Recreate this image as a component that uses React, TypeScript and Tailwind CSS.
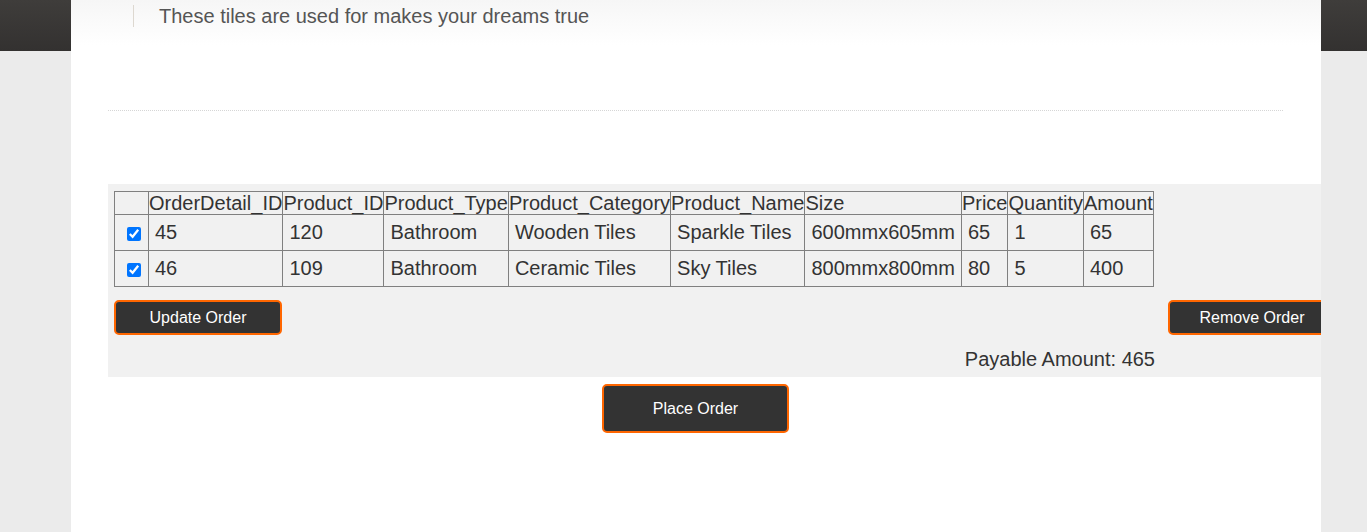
const rows = [
  {
    id: "45",
    productId: "120",
    type: "Bathroom",
    category: "Wooden Tiles",
    name: "Sparkle Tiles",
    size: "600mmx605mm",
    price: "65",
    qty: "1",
    amount: "65",
  },
  {
    id: "46",
    productId: "109",
    type: "Bathroom",
    category: "Ceramic Tiles",
    name: "Sky Tiles",
    size: "800mmx800mm",
    price: "80",
    qty: "5",
    amount: "400",
  },
];

const headers = [
  "",
  "OrderDetail_ID",
  "Product_ID",
  "Product_Type",
  "Product_Category",
  "Product_Name",
  "Size",
  "Price",
  "Quantity",
  "Amount",
];

const btn =
  "h-[35px] w-[168px] shrink-0 rounded-[5px] border-2 border-[#ff6600] bg-[#333333] text-[16px] text-white";

export default function App() {
  return (
    <div
      className="min-h-[532px] w-full bg-[linear-gradient(to_bottom,#3f3d3b_0px,#333130_51px,#ebebeb_51px,#ebebeb_100%)]"
      style={{ fontFamily: '"Liberation Sans", Arial, sans-serif' }}
    >
      <div className="ml-[71px] h-[532px] w-[1250px] overflow-hidden bg-white bg-[linear-gradient(to_bottom,#f6f6f6_0px,#ffffff_45px)]">
        <div className="pt-[5px]">
          <blockquote className="ml-[62px] h-[22px] border-l border-[#ddd8d0] pl-[25px] text-[20px] leading-[22px] text-[#555555]">
            These tiles are used for makes your dreams true
          </blockquote>
        </div>

        <div className="ml-[37px] mt-[83px] w-[1175px] border-t border-dotted border-[#d6d6d6]" />

        <div className="ml-[37px] mt-[73px] w-[1240px] bg-[#f1f1f1] pb-[6px] pl-[6px] pt-[7px] text-[20px] text-[#333333]">
          <table className="border-collapse">
            <thead>
              <tr>
                {headers.map((h, i) => (
                  <th
                    key={i}
                    className="border border-[#808080] p-0 text-left font-normal leading-[22px]"
                  >
                    {h}
                  </th>
                ))}
              </tr>
            </thead>
            <tbody>
              {rows.map((r) => (
                <tr key={r.id}>
                  <td className="w-[34px] border border-[#808080] p-0 pl-[4px] text-center align-middle leading-[23px]">
                    <input
                      type="checkbox"
                      checked
                      readOnly
                      className="m-0 h-[14px] w-[14px] align-middle"
                    />
                  </td>
                  {[
                    r.id,
                    r.productId,
                    r.type,
                    r.category,
                    r.name,
                    r.size,
                    r.price,
                    r.qty,
                    r.amount,
                  ].map((v, i) => (
                    <td
                      key={i}
                      className="border border-[#808080] px-[6px] py-[6px] leading-[23px]"
                    >
                      {v}
                    </td>
                  ))}
                </tr>
              ))}
            </tbody>
          </table>

          <div className="mt-[13px] flex w-[1222px] justify-between">
            <button className={btn}>Update Order</button>
            <button className={btn}>Remove Order</button>
          </div>

          <div className="mt-[13px] w-[1041px] text-right leading-[23px]">
            Payable Amount: 465
          </div>
        </div>

        <div className="ml-[37px] mt-[7px] flex w-[1175px] justify-center">
          <button className="h-[49px] w-[187px] rounded-[5px] border-2 border-[#ff6600] bg-[#333333] text-[16px] text-white">
            Place Order
          </button>
        </div>
      </div>
    </div>
  );
}
